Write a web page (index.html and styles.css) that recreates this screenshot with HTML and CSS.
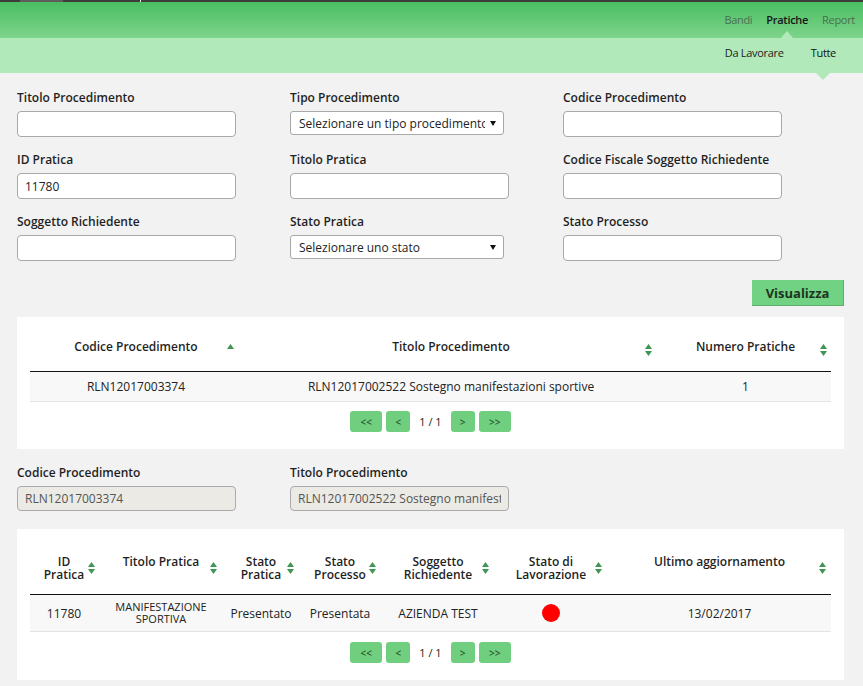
FILE: index.html
```html
<!DOCTYPE html>
<html lang="it">
<head>
<meta charset="utf-8">
<title>Pratiche</title>
<link rel="stylesheet" href="styles.css">
</head>
<body>
<div class="topline"><span class="tl-tab"></span><span class="tl-mark"></span></div>
<header class="mainbar">
  <nav class="mainnav">
    <a class="nav-item">Bandi</a>
    <a class="nav-item active">Pratiche</a>
    <a class="nav-item">Report</a>
  </nav>
</header>
<div class="subbar">
  <nav class="subnav">
    <a class="sub-item">Da Lavorare</a>
    <a class="sub-item active">Tutte</a>
  </nav>
</div>

<main class="content">
  <form class="filters">
    <div class="field"><label class="lbl">Titolo Procedimento</label><input class="inp" type="text"></div>
    <div class="field"><label class="lbl">Tipo Procedimento</label>
      <div class="select-wrap"><select class="sel"><option>Selezionare un tipo procedimento</option></select>
        <svg class="caret" width="6" height="5" viewBox="0 0 6 5"><polygon points="0,0 6,0 3,5" fill="#111"/></svg></div>
    </div>
    <div class="field"><label class="lbl">Codice Procedimento</label><input class="inp" type="text"></div>

    <div class="field"><label class="lbl">ID Pratica</label><input class="inp" type="text" value="11780"></div>
    <div class="field"><label class="lbl">Titolo Pratica</label><input class="inp" type="text"></div>
    <div class="field"><label class="lbl">Codice Fiscale Soggetto Richiedente</label><input class="inp" type="text"></div>

    <div class="field"><label class="lbl">Soggetto Richiedente</label><input class="inp" type="text"></div>
    <div class="field"><label class="lbl">Stato Pratica</label>
      <div class="select-wrap"><select class="sel"><option>Selezionare uno stato</option></select>
        <svg class="caret" width="6" height="5" viewBox="0 0 6 5"><polygon points="0,0 6,0 3,5" fill="#111"/></svg></div>
    </div>
    <div class="field"><label class="lbl">Stato Processo</label><input class="inp" type="text"></div>
  </form>

  <div class="actions"><button class="btn-primary" type="button">Visualizza</button></div>

  <section class="panel panel-proc">
    <table class="grid grid-proc">
      <colgroup><col class="c-p1"><col class="c-p2"><col class="c-p3"></colgroup>
      <thead>
        <tr>
          <th>Codice Procedimento<svg class="sort s-r8" width="7" height="12" viewBox="0 0 7 12"><polygon points="0,5 3.5,0 7,5" fill="#3f9553"/></svg></th>
          <th>Titolo Procedimento<svg class="sort s-r8" width="7" height="12" viewBox="0 0 7 12"><polygon points="0,5 3.5,0 7,5" fill="#3f9553"/><polygon points="0,7 7,7 3.5,12" fill="#3f9553"/></svg></th>
          <th>Numero Pratiche<svg class="sort s-r4" width="7" height="12" viewBox="0 0 7 12"><polygon points="0,5 3.5,0 7,5" fill="#3f9553"/><polygon points="0,7 7,7 3.5,12" fill="#3f9553"/></svg></th>
        </tr>
      </thead>
      <tbody>
        <tr>
          <td>RLN12017003374</td>
          <td>RLN12017002522 Sostegno manifestazioni sportive</td>
          <td>1</td>
        </tr>
      </tbody>
    </table>
    <div class="pager">
      <button class="pg pg-wide" type="button">&lt;&lt;</button>
      <button class="pg" type="button">&lt;</button>
      <span class="pg-label">1 / 1</span>
      <button class="pg" type="button">&gt;</button>
      <button class="pg pg-wide" type="button">&gt;&gt;</button>
    </div>
  </section>

  <div class="detail">
    <div class="field"><label class="lbl">Codice Procedimento</label><input class="inp inp-dis" type="text" value="RLN12017003374" disabled></div>
    <div class="field"><label class="lbl">Titolo Procedimento</label><input class="inp inp-dis" type="text" value="RLN12017002522 Sostegno manifestazioni sportive" disabled></div>
  </div>

  <section class="panel panel-prat">
    <table class="grid grid-prat">
      <colgroup><col class="c-1"><col class="c-2"><col class="c-3"><col class="c-4"><col class="c-5"><col class="c-6"><col class="c-7"></colgroup>
      <thead>
        <tr>
          <th>ID<br>Pratica<svg class="sort s-r3" width="7" height="12" viewBox="0 0 7 12"><polygon points="0,5 3.5,0 7,5" fill="#3f9553"/><polygon points="0,7 7,7 3.5,12" fill="#3f9553"/></svg></th>
          <th>Titolo Pratica<svg class="sort s-r7" width="7" height="12" viewBox="0 0 7 12"><polygon points="0,5 3.5,0 7,5" fill="#3f9553"/><polygon points="0,7 7,7 3.5,12" fill="#3f9553"/></svg></th>
          <th>Stato<br>Pratica<svg class="sort s-r4" width="7" height="12" viewBox="0 0 7 12"><polygon points="0,5 3.5,0 7,5" fill="#3f9553"/><polygon points="0,7 7,7 3.5,12" fill="#3f9553"/></svg></th>
          <th>Stato<br>Processo<svg class="sort s-r6" width="7" height="12" viewBox="0 0 7 12"><polygon points="0,5 3.5,0 7,5" fill="#3f9553"/><polygon points="0,7 7,7 3.5,12" fill="#3f9553"/></svg></th>
          <th>Soggetto<br>Richiedente<svg class="sort s-r5" width="7" height="12" viewBox="0 0 7 12"><polygon points="0,5 3.5,0 7,5" fill="#3f9553"/><polygon points="0,7 7,7 3.5,12" fill="#3f9553"/></svg></th>
          <th>Stato di<br>Lavorazione<svg class="sort s-r6" width="7" height="12" viewBox="0 0 7 12"><polygon points="0,5 3.5,0 7,5" fill="#3f9553"/><polygon points="0,7 7,7 3.5,12" fill="#3f9553"/></svg></th>
          <th>Ultimo aggiornamento<svg class="sort s-r5" width="7" height="12" viewBox="0 0 7 12"><polygon points="0,5 3.5,0 7,5" fill="#3f9553"/><polygon points="0,7 7,7 3.5,12" fill="#3f9553"/></svg></th>
        </tr>
      </thead>
      <tbody>
        <tr>
          <td>11780</td>
          <td class="td-small">MANIFESTAZIONE<br>SPORTIVA</td>
          <td>Presentato</td>
          <td>Presentata</td>
          <td>AZIENDA TEST</td>
          <td><span class="dot"></span></td>
          <td>13/02/2017</td>
        </tr>
      </tbody>
    </table>
    <div class="pager pager-lo">
      <button class="pg pg-wide" type="button">&lt;&lt;</button>
      <button class="pg" type="button">&lt;</button>
      <span class="pg-label">1 / 1</span>
      <button class="pg" type="button">&gt;</button>
      <button class="pg pg-wide" type="button">&gt;&gt;</button>
    </div>
  </section>
</main>
</body>
</html>
```

FILE: styles.css
```css
* { box-sizing: border-box; }

body {
  margin: 0;
  background: #f2f2f2;
  font-family: "Open Sans", "DejaVu Sans", sans-serif;
  font-size: 12px;
  color: #222;
}

/* top strip */
.topline {
  height: 2px;
  background: #3c3c3c;
  display: flex;
}
.tl-tab { margin-left: 20px; width: 43px; background: #5d5d5d; }
.tl-mark { margin-left: 77px; width: 1px; background: #e8e8e8; }

/* main bar */
.mainbar {
  height: 36px;
  background: linear-gradient(#4abe61, #7dd48c);
  display: flex;
  justify-content: flex-end;
  padding-right: 8px;
}
.mainnav { display: flex; gap: 14px; }
.nav-item {
  position: relative;
  display: flex;
  align-items: center;
  padding-bottom: 2px;
  font-size: 11px;
  letter-spacing: -0.3px;
  color: #4b6e51;
}
.nav-item.active { color: #161616; font-weight: 600; }
.nav-item.active::after {
  content: "";
  position: absolute;
  bottom: 0;
  left: 50%;
  margin-left: -6px;
  border-left: 6px solid transparent;
  border-right: 6px solid transparent;
  border-bottom: 7px solid #b2e9ba;
}

/* sub bar */
.subbar {
  height: 35px;
  background: #b2e9ba;
  display: flex;
  justify-content: flex-end;
  padding-right: 27px;
}
.subnav { display: flex; gap: 27px; }
.sub-item {
  position: relative;
  display: flex;
  align-items: center;
  padding-bottom: 7px;
  font-size: 11px;
  letter-spacing: -0.3px;
  color: #1e1e1e;
}
.sub-item.active { color: #111; }
.sub-item.active::after {
  content: "";
  position: absolute;
  top: 100%;
  left: 50%;
  margin-left: -7px;
  border-left: 7px solid transparent;
  border-right: 7px solid transparent;
  border-top: 7px solid #b2e9ba;
}

/* content */
.content { padding: 16px 19px 0 17px; }

.filters {
  display: grid;
  grid-template-columns: 273px 273px 1fr;
  row-gap: 14px;
}
.lbl {
  display: block;
  font-weight: 600;
  font-size: 12px;
  line-height: 16px;
  padding-top: 1px;
  margin-bottom: 5px;
  color: #1f1f1f;
}
.inp {
  display: block;
  width: 219px;
  height: 26px;
  border: 1px solid #a8a8a8;
  border-radius: 4px;
  background: #fff;
  padding: 0 7px;
  font-family: inherit;
  font-size: 12px;
  color: #222;
}
.inp-dis {
  height: 25px;
  background: #ebeae5;
  color: #555;
  border-color: #ababab;
}

.select-wrap { position: relative; width: 214px; }
.sel {
  appearance: none;
  -webkit-appearance: none;
  display: block;
  width: 214px;
  height: 24px;
  border: 1px solid #a8a8a8;
  border-radius: 3px;
  background: #fff;
  padding: 0 18px 0 8px;
  font-family: inherit;
  font-size: 12px;
  color: #222;
}
.caret { position: absolute; right: 8px; top: 10px; }

.actions {
  display: flex;
  justify-content: flex-end;
  margin-top: 19px;
}
.btn-primary {
  width: 92px;
  height: 26px;
  background: #72d283;
  border: none;
  border-right: 1px solid #5fae6e;
  border-bottom: 1px solid #5fae6e;
  font-family: inherit;
  font-weight: 700;
  font-size: 13px;
  color: #1b3520;
  padding: 0;
}

/* panels */
.panel {
  background: #fff;
  padding: 12px 13px 17px;
}
.panel-proc { margin-top: 11px; }
.panel-prat { margin-top: 18px; }

.grid {
  width: 100%;
  border-collapse: collapse;
  table-layout: fixed;
}
.grid th {
  position: relative;
  font-weight: 600;
  font-size: 12px;
  color: #1f1f1f;
  text-align: center;
  border-bottom: 1px solid #111;
}
.grid td {
  text-align: center;
  background: #f8f8f8;
  border-bottom: 1px solid #e3e3e3;
  padding: 0 2px;
  color: #222;
}

.grid-proc th { padding: 10px 8px 16px; line-height: 16px; }
.grid-proc td { height: 30px; }
.c-p1 { width: 212px; }
.c-p2 { width: 418px; }
.c-p3 { width: 171px; }

.grid-prat th {
  vertical-align: top;
  padding: 14px 2px 13px;
  line-height: 13px;
}
.grid-prat td { height: 37px; }
.c-1 { width: 68px; }
.c-2 { width: 126px; }
.c-3 { width: 74px; }
.c-4 { width: 84px; }
.c-5 { width: 112px; }
.c-6 { width: 114px; }
.c-7 { width: 223px; }

.td-small { font-size: 11px; line-height: 12px; }

.sort { position: absolute; top: 50%; margin-top: -6px; }
.s-r3 { right: 3px; }
.s-r4 { right: 4px; }
.s-r5 { right: 5px; }
.s-r6 { right: 6px; }
.s-r7 { right: 7px; }
.s-r8 { right: 8px; }

.dot {
  display: inline-block;
  width: 18px;
  height: 18px;
  border-radius: 50%;
  background: #ff0000;
  vertical-align: middle;
}

/* pager */
.pager {
  display: flex;
  justify-content: center;
  align-items: center;
  gap: 4px;
  margin-top: 9px;
}
.pager-lo { margin-top: 10px; }
.pg {
  width: 24px;
  height: 21px;
  background: #6fcf7f;
  border: none;
  border-radius: 3px;
  font-family: inherit;
  font-size: 10px;
  color: #1c3a21;
  padding: 0;
}
.pg-wide { width: 32px; }
.pg-label { font-size: 11px; padding: 0 5px; color: #222; }

.detail {
  display: grid;
  grid-template-columns: 273px 273px;
  margin-top: 15px;
}
```
